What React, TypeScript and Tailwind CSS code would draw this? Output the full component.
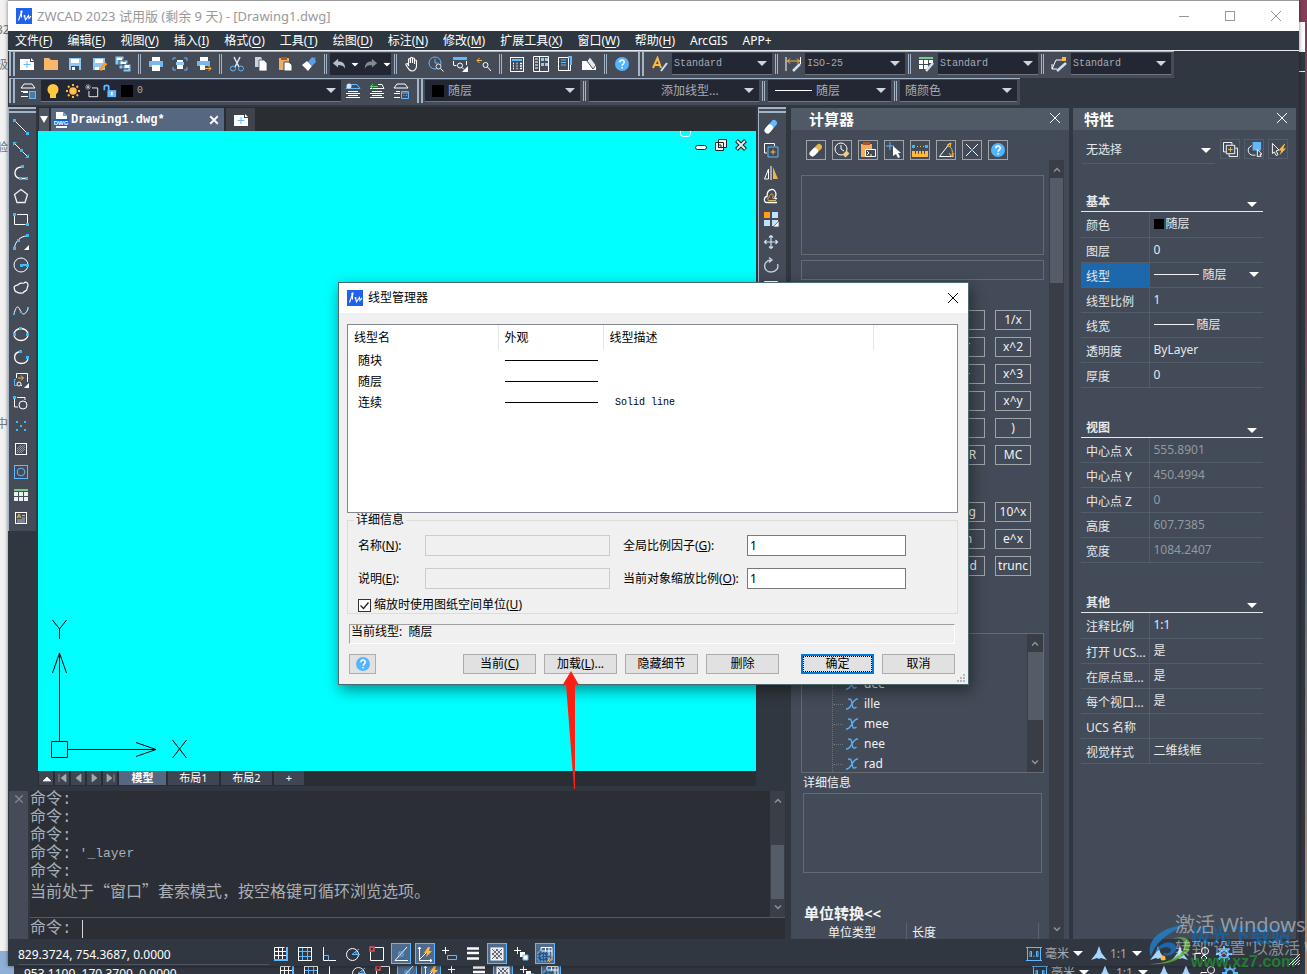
import type { ReactNode } from 'react'

const B = '#61b8ff'
const O = '#ffb93f'
const W = '#ffffff'

// アイコンはすべて 16x16 の viewBox で描く
const icons: Record<string, ReactNode> = {
  newDoc: <><path d="M1 3h10v3h4v8H1z" fill={W} stroke="none" /><path d="M12 2l3 3h-3z" fill={W} stroke="none" /><path d="M8 5v7M4.500 8.500h7" stroke={B} /></>,
  folder: <path d="M1 2h5l2 2h7v10H1z" fill="#f8b769" stroke="none" />,
  save: <><path d="M2 2h12v12H2z" fill="#8cc8f8" stroke="none" /><path d="M4 3h8v4H4z" fill={W} stroke="none" /><path d="M4 10h8v4H4z" fill="#3a4b66" stroke="none" /><path d="M5 11h3v3H5z" fill={W} stroke="none" /></>,
  saveAs: <><path d="M2 2h12v12H2z" fill="#8cc8f8" stroke="none" /><path d="M4 3h8v4H4zM4 11h4v3H4z" fill={W} stroke="none" /><path d="M9 14l6-7" stroke="#ff9b2b" strokeWidth="3" /></>,
  saveAll: <><path d="M0 0h9v9H0zM4 4h9v9H4zM8 8h8v8H8z" fill="#8cc8f8" stroke="#454b57" /><path d="M2 2h5v2H2zM6 6h5v2H6zM10 9h4v3h-4z" fill={W} stroke="none" /></>,
  print: <><path d="M4 1h8v4H4zM4 9h8v6H4z" fill={W} stroke="none" /><path d="M1 5h14v6H1z" fill="#74b8ef" stroke="none" /><path d="M4 9h8v5H4z" fill={W} stroke="none" /></>,
  preview: <><path d="M1 4V2h3M12 2h3v3M15 11v3h-3M4 14H1v-3" stroke={B} /><path d="M5 4h6v2H5zM5 9h6v4H5z" fill={W} stroke="none" /><path d="M4 6h8v3H4z" fill="#8cc8f8" stroke="none" /></>,
  plot: <><path d="M4 1h8v4H4z" fill={W} stroke="none" /><path d="M1 5h13v5H1z" fill="#74b8ef" stroke="none" /><path d="M4 9h5v5H4z" fill={W} stroke="none" /><path d="M9 12.500h6M12.500 10l2.500 2.500-2.500 2.500" stroke={O} /></>,
  cut: <><path d="M5 1l5 10M11 1L6 11" stroke="#dfe9f5" strokeWidth="1.500" /><circle cx="4" cy="12.500" r="2.500" stroke={B} /><circle cx="12" cy="12.500" r="2.500" stroke={B} /></>,
  copy: <><path d="M2 1h6l1 2v8H2z" fill="#c9d3e0" stroke="none" /><path d="M6 4h5l3 3v8H6z" fill={W} stroke="#454b57" strokeWidth=".8" /></>,
  paste: <><path d="M2 2h10v12H2z" fill="#f1ad63" stroke="none" /><path d="M4 1h6v3H4z" fill="#a8572a" stroke="none" /><path d="M7 6h5l3 3v6H7z" fill={W} stroke="#454b57" /></>,
  brush: <><path d="M1 9l5-4 5 5-4 5z" fill={W} stroke="none" /><path d="M7 6l4 4 4-4-1-3 1-2-2 1-2-1z" fill="#5b9de6" stroke="none" /></>,
  undo: <path d="M1 7l6-5v3c5 0 8 2 8 8-2-3-4-4-8-4v3z" fill="#b8bcc4" stroke="none" />,
  redo: <path d="M15 7L9 2v3c-5 0-8 2-8 8 2-3 4-4 8-4v3z" fill="#84888f" stroke="none" />,
  pan: <path d="M4.500 10V4M4.500 8V3.500c0-1.300 1.800-1.300 1.800 0V7M6.500 7V2.300c0-1.300 2-1.300 2 0V7M8.500 7V3c0-1.300 2-1.300 2 0v5M10.500 7V5c0-1.300 2-1.300 2 0v5c0 3-2 5-4.500 5S5 13.500 4 12L2 9c-.5-1.500 1.200-1.800 2-.5L5 10" stroke={W} strokeWidth="1.100" />,
  zoomRt: <><circle cx="7" cy="7" r="6" stroke={B} /><path d="M7 3v4h3" stroke={B} /><circle cx="10.500" cy="10.500" r="2.500" stroke="#dde3ea" fill="#454b57" /><path d="M12.500 12.500l3 3" /></>,
  zoomWin: <><path d="M1.500 9V5M14.500 5v4" /><path d="M1 1h14v3H1z" fill={B} stroke="none" /><path d="M1.500 9.500h3" /><circle cx="8" cy="9.500" r="2.500" /><path d="M10 11.500l2 2" /><path d="M16 10v6h-6z" fill={W} stroke="none" /></>,
  zoomPrev: <><path d="M6 4.500H1M3.500 2L1 4.500 3.500 7" stroke={O} /><circle cx="9.500" cy="9" r="2.500" /><path d="M11.500 11l3.500 4" /></>,
  calc: <><rect x="1.500" y="1.500" width="13" height="14" /><path d="M3 4h10" stroke={B} strokeWidth="2" /><path d="M4 7.500h1M7.500 7.500h1M11 7.500h2M4 10h1M7.500 10h1M11 10h2M4 12.500h1M7.500 12.500h1M11 12.500h2" strokeWidth="1.500" /></>,
  palette: <><path d="M.5.500h15v15H.5zM6.500.5v15M2 3h3M2 6h3M2 9h3M2 12h3" /><path d="M8 2h3v3H8zM12 2h3v3h-3zM8 7h3v3H8zM12 7h3v3h-3z" fill="#9fc9ef" stroke="none" /></>,
  sheet: <><path d="M1.500 1.500h10v13h-10z" /><path d="M4 4h5M4 6.500h5M4 9h5" stroke={B} /><path d="M11 1h3v8" stroke={B} strokeWidth="2" /><path d="M13.500 9v5.500h-2" /></>,
  roll: <><path d="M1 5h7l7 5v4H1z" fill={W} stroke="none" /><path d="M6 5l3-4 6 8-3 4z" fill="#e4e8ee" stroke="#454b57" /></>,
  help: <><circle cx="8" cy="8" r="7" fill="#54b4ff" stroke="none" /><path d="M5.800 6.300c0-3 4.500-3 4.500-.2 0 1.800-2.200 1.700-2.200 3.700M8.100 11v1.500" stroke={W} strokeWidth="1.500" /></>,
  textStyle: <><path d="M1 12L5.500 2 9 12M3 9h5" stroke={O} strokeWidth="2" /><path d="M9 15l6-8" stroke="#cfdff0" strokeWidth="2" /></>,
  dimStyle: <><path d="M1 1v14M15.500 1v7" /><path d="M2 5h13M5 2.500L2.500 5 5 7.500M12 2.500L14.500 5 12 7.500" stroke={O} /><path d="M8 15l7-7" stroke="#cfdff0" strokeWidth="2.500" /></>,
  tableStyle: <><path d="M1 1h14v2H1z" fill="#79c98a" stroke="none" /><path d="M1 4h4v4H1zM6 4h4v4H6zM11 4h4v3h-4zM1 9h4v4H1zM6 9h4v4H6z" fill={W} stroke="none" /><path d="M8 15l7-8" stroke="#cfdff0" strokeWidth="2.500" /></>,
  leaderStyle: <><path d="M1 13l4-9h6M1 8v5h5" /><path d="M11 1h4v4h-4z" fill={O} stroke="none" /><path d="M6 15l9-8" stroke="#cfdff0" strokeWidth="2.500" /></>,
  layers: <><path d="M4 1h8l3 4H1zM1 8.500h7M3 9.500h5M1 13.500h7" /><path d="M9 8h7v8H9z" fill={B} stroke="none" /><path d="M10 10h5M10 12h5M10 14h5" stroke="#2f3d52" /></>,
  layerCur: <><path d="M4 1.500h8l3 4H1z" stroke={B} /><circle cx="4" cy="3" r="2.500" fill="#dbe6f2" stroke="none" /><path d="M3 8.500h10M1 10.500h14M3 12.500h10M1 14.500h14" /></>,
  layerPrev: <><path d="M9 1.500h4l2 4H1" /><path d="M9 3.500H2M4 1L1.500 3.500 4 6" stroke="#5bd06b" /><path d="M3 8.500h10M1 10.500h14M3 12.500h10M1 14.500h14" /></>,
  layerState: <><path d="M4 1h8l3 4H1zM3 8.500h4M1 10.500h6M1 14.500h6" /><path d="M8.500 8.500h7v7h-7zM9 10h6M10.500 12.500h1M13 12.500h1" stroke={B} /></>,
  bulb: <><circle cx="8" cy="6.500" r="5.500" fill="#ffc83d" stroke="none" /><path d="M5 11h6v4H5z" fill="#ffc83d" stroke="none" /></>,
  sun: <><circle cx="8" cy="8" r="3" stroke={O} strokeWidth="1.500" fill="#ffc83d" /><path d="M8 1v2M8 13v2M1 8h2M13 8h2M3 3l1.500 1.500M11.500 11.500L13 13M13 3l-1.500 1.500M3 13l1.500-1.500" stroke={O} strokeWidth="2" /></>,
  viewport: <><path d="M8 4.500h6.500v10h-10V8" /><path d="M3.500 0v7M0 3.500h7M1 1l5 5M6 1L1 6" stroke="#c8ccd2" strokeWidth=".8" /></>,
  lock: <><path d="M1.500 7V3c0-2 5-2 5 0v4" stroke={B} strokeWidth="2" /><path d="M5 7h10v8H5z" fill={B} stroke="none" /><path d="M9 9h2v4H9z" fill={W} stroke="none" /></>,
  line: <><path d="M1.500 1.500l13 13" /><path d="M0 0h3v3H0zM13 13h3v3h-3z" fill="#36bdf8" stroke="none" /></>,
  xline: <><path d="M1 1l14 14" /><path d="M0 0h4L0 4zM16 16v-4l-4 4zM7 7h3v3H7z" fill="#36bdf8" stroke="none" /></>,
  pline: <><path d="M9 2C0 2 0 13 7 13.500h7" strokeWidth="1.300" /><path d="M8 0h3v3H8zM6 12h3v3H6zM12 12h3v3h-3z" fill="#36bdf8" stroke="none" /></>,
  polygon: <path d="M8 1.500l6.500 5-2.500 8H4l-2.500-8z" stroke="#f0f2f4" strokeWidth="1.300" />,
  rect: <><path d="M1.500 4v9.500h11M4 3.500h10.500V12" /><path d="M0 2h3v3H0zM13 12h3v3h-3z" fill="#36bdf8" stroke="none" /></>,
  arc: <><path d="M1.500 14C2 8 7 2 14 2" /><path d="M0 13h3v3H0zM4 5h3v3H4zM13 0h3v3h-3z" fill="#36bdf8" stroke="none" /><path d="M16 11v5h-5z" fill={W} stroke="none" /></>,
  circle: <><circle cx="8" cy="8" r="7" /><path d="M9 8h5" /><path d="M7 7h3v3H7zM13 7h3v3h-3z" fill="#36bdf8" stroke="none" /></>,
  cloud: <path d="M1 7c2-3 4-1 5-3 2-2 3 0 5-1 2-2 4 0 4 2s-1 2-1 4-3 2-4 4c-2 0-4 1-6-1-3 0-2-2-3-5z" strokeWidth="1.200" />,
  spline: <><path d="M1 11C3 3 5 2 7 7s5 6 8-1" /><path d="M0 10h2v2H0zM7 8h2v2H7zM14 4h2v2h-2z" fill="#36bdf8" stroke="none" /></>,
  ellipse: <><ellipse cx="8" cy="8.500" rx="7" ry="6" strokeWidth="1.300" /><path d="M6 1h3v3H6zM0 7h3v3H0zM13 7h3v3h-3z" fill="#36bdf8" stroke="none" /></>,
  ellArc: <><path d="M8 2.500c-9 1-8 11 0 12 4 0 7-2 7-6" strokeWidth="1.300" /><path d="M6 1h3v3H6zM13 7h3v3h-3z" fill="#36bdf8" stroke="none" /></>,
  insert: <><path d="M3.500 6V1.500h11V10M8 13.500H9" /><path d="M3 7.500H1.500v6H4" stroke={B} /><circle cx="6" cy="12" r="2" /><path d="M5 6h5M8 3.500L10.500 6 8 8.500" stroke={O} /><path d="M16 11v5h-5z" fill={W} stroke="none" /></>,
  block: <><path d="M1.500 4v8H5M4 2.500h8V5" /><circle cx="10" cy="10" r="4" /><path d="M0 1h3v3H0z" fill="#36bdf8" stroke="none" /></>,
  points: <path d="M3 3h2v2H3zM11 3h2v2h-2zM7 7h2v2H7zM3 11h2v2H3zM11 11h2v2h-2z" fill="#36bdf8" stroke="none" />,
  hatch: <><rect x="2.500" y="2.500" width="11" height="11" /><path d="M4 8l4-4M4 12l8-8M8 12l4-4M6 12l6-6M4 10l6-6" stroke={B} strokeWidth=".8" /></>,
  region: <><rect x="1.500" y="1.500" width="13" height="13" stroke={B} /><circle cx="8" cy="8" r="3.800" stroke={B} /></>,
  table: <><path d="M1 2h14v2H1z" fill="#79c98a" stroke="none" /><path d="M1 5h4v4H1zM6 5h4v4H6zM11 5h4v4h-4zM1 10h4v4H1zM6 10h4v4H6zM11 10h4v4h-4z" fill="#eceff2" stroke="none" /></>,
  mtext: <><rect x="2.500" y="2.500" width="11" height="11" /><path d="M4 8l2-4 2 4M5 7h2" stroke={O} /><path d="M9 5.500h3M9 8h3M4 10h8M4 12h8" stroke="#cfdff0" strokeWidth=".8" /></>,
  erase: <><path d="M6 10l5-6" stroke={B} strokeWidth="6" strokeLinecap="round" /><path d="M4.500 11.500l2.500-3" stroke={W} strokeWidth="6" strokeLinecap="round" /></>,
  copyObj: <><path d="M4 11H1.500V1.500h10V4" /><path d="M5 5h10v10H5z" stroke={B} /><path d="M10 7.500v5M7.500 10h5" stroke={O} /></>,
  mirror: <><path d="M5.500 4v10H1.500zM8 1v14" /><path d="M10 2l5 12h-5z" fill="#e8b54d" stroke="none" /></>,
  offset: <><path d="M14 14.500H4c-4 0-3-6 0-6 0-9 9-9 9-2 0 2-2 3-1 4h2" strokeWidth="1.300" /><path d="M13 12.500H6c-2 0-1-3 0-3 1-5 5-4 4-1-.5 1.500-1 2 1 2" stroke="#e8b54d" /></>,
  array: <><path d="M1 1h6v6H1z" fill="#ff9f12" stroke="none" /><path d="M9 1h6v6H9zM1 9h6v6H1zM9 9h6v6H9z" fill="#bfe0ff" stroke="none" /><path d="M16 10v6h-6z" fill={W} stroke="#454b57" strokeWidth=".7" /></>,
  move: <path d="M8 1.500v13M1.500 8h13M6 3.500L8 1.500l2 2M6 12.500l2 2 2-2M3.500 6l-2 2 2 2M12.500 6l2 2-2 2" stroke="#cfe2f5" strokeWidth="1.200" />,
  rotate: <path d="M8 3C-1 4 0 15 8 15c5 0 8-4 6.500-8M6 .5L9 3 6 5.500" stroke="#b9cfe6" strokeWidth="1.400" />,
  scale: <path d="M1.500 1.500h13v13h-13z" />,
  eraseGold: <><path d="M6 10l5-5" stroke="#e8b54d" strokeWidth="6" strokeLinecap="round" /><path d="M4.500 11.500l2.500-2.500" stroke={W} strokeWidth="6" strokeLinecap="round" /></>,
  history: <><circle cx="7" cy="7" r="6" /><path d="M7 3v4l3 2" /><path d="M10 14l4-4" stroke="#f3cc83" strokeWidth="4" /></>,
  pasteCmd: <><path d="M1 2h11v13H1z" fill="#f1ad63" stroke="none" /><path d="M3 0h7v3H3z" fill="#a8572a" stroke="none" /><path d="M5.500 7.500h10v7h-10z" fill="#424b57" /><path d="M7 9l2 2-2 2M10 13h2" /></>,
  pick: <><path d="M4 0v8M0 4h8" stroke={B} /><path d="M7 4l8 7h-3l2 4-2 1-2-4-3 2z" fill={W} stroke="none" /></>,
  ruler: <><path d="M0 9h16v6H0z" fill={O} stroke="none" /><path d="M3.500 9v3M6.500 9v3M9.500 9v3M12.500 9v3" stroke="#424b57" /><path d="M0 3h3v3H0zM13 3h3v3h-3z" fill="#36bdf8" stroke="none" /><path d="M5 4.500h1M8 4.500h1M11 4.500h1" stroke={O} /></>,
  angle: <><path d="M12 1L1.500 14.500h14" /><path d="M10 4c4 1 5 5 4 10M9 3l4-2-1 4M11 11l3 4 2-4" stroke={O} /></>,
  cross: <><path d="M2 2l12 12M14 2L2 14" /><path d="M7 7h2v2H7z" fill={B} stroke="none" /></>,
  quickSel: <><path d="M3 10.500H.5V.500h9V3M13 6.500h2.500v9h-9V13" /><path d="M3.500 3.500h9v9h-9z" /><path d="M8 5.500v5M5.500 8h5" stroke={O} /></>,
  selBox: <><path d="M5 4c-6 2-4 10 1 10h3" /><path d="M6 0h9v9H6z" fill={B} stroke="none" /><path d="M11 8l5 5h-2l1 3-2-1-2 1z" fill="#424b57" /></>,
  flashSel: <><path d="M1.500 1.500l7 7-3 1 2 4-2 1-2-4-2 2z" /><path d="M14 2l-6 7h3l-2 5 7-7h-3l2-5z" fill={O} stroke="none" /></>,
  snap: <><path d="M1.500 1.500h10M1.500 5.500h12M1.500 9.500h12M1.500 1.500v12M5.500 1.500v12M9.500 1.500v12" /><path d="M14 1v13H1" stroke={B} strokeWidth="2" /></>,
  grid: <><path d="M5.500 1.500v13M10.500 1.500v13M1.500 5.500h13M1.500 10.500h13" stroke={B} /><rect x="1.500" y="1.500" width="13" height="13" /></>,
  ortho: <><path d="M2.500 1v13.500H15" /><path d="M2.500 9.500h5v5" stroke={B} /></>,
  polar: <><circle cx="7.500" cy="8.500" r="6" /><path d="M14 3L7 8.500h8M11 5v4" stroke={B} /></>,
  osnap: <><path d="M6 1.500h8.500v13H1.500V6" /><path d="M1 1h4v4H1z" stroke="#e0545c" strokeWidth="1.500" /></>,
  otrack: <><path d="M14 1L2 14.500h13" stroke={W} /><path d="M6 6h4v4H6z" stroke={B} /></>,
  ucs: <><path d="M2.500 1v13.500H15M1 3l1.500-2L4 3M13 13l2 1.500-2 1.500M2 14L10 6" /><path d="M11 1L7 7h3l-1 4 6-6h-3l1-4z" fill={O} stroke="none" /></>,
  dyn: <><path d="M4.500 1v7M1 4.500h7" /><path d="M6.500 9.500h9v4h-9z" stroke={B} /></>,
  lwt: <path d="M2 2.500h12M2 7h12M2 12.500h12" strokeWidth="2.500" />,
  trans: <><rect x="2" y="2" width="12" height="12" fill="#e0e3e7" /><path d="M3 3l10 10M3 7l6 6M7 3l6 6M13 3L3 13M9 3L3 9M13 7l-6 6" stroke="#454b57" strokeWidth=".8" /></>,
  cycle: <><path d="M4.500 1v7M1 4.500h7" /><path d="M7 6h5v5H7z" fill={W} stroke="none" /><path d="M10 9h5v5h-5z" fill={W} stroke={B} /></>,
  model: <><path d="M4 5V1.500h11V10M8.500 1.500v8M12 1.500v8M5 5h10" /><path d="M1 6h10v9H1zM4 9h4v3H4z" stroke={B} fill="#33527a" strokeDasharray="2 1" /><path d="M15 10v4h-4M13 12l-2 2 2 2" stroke={O} /></>,
  units: <><path d="M0 1.500h16M0 14.500h16M1.500 1v14M14.500 1v14" stroke={B} /><path d="M4 5.500h1.500v5H4zM10.500 5.500H12v5h-1.500zM8 9.500v1.500" stroke={B} /></>,
  anno: <path d="M8 0l2.500 7L16 14l-6-2-2 1-2-1-6 2 5.500-7z" fill="#a9d6ff" stroke="none" />,
  annoDot: <><path d="M8 0l2.500 7L16 14l-6-2-2 1-2-1-6 2 5.500-7z" fill="#a9d6ff" stroke="none" /><circle cx="13" cy="12" r="2.500" fill={O} stroke="none" /></>,
  iso: <><path d="M1 14V7.500h6" /><circle cx="11" cy="5" r="3.500" /><path d="M10 9l3 3-3 3-3-3z" /></>,
  gear: <><circle cx="8" cy="8" r="4" stroke={B} strokeWidth="2.200" /><path d="M8 0v3M8 13v3M0 8h3M13 8h3M2.500 2.500l2 2M11.500 11.500l2 2M13.500 2.500l-2 2M2.500 13.500l2-2" stroke={B} strokeWidth="2" /></>,
  close: <path d="M3 3l10 10M13 3L3 13" stroke="currentColor" />,
  x: <path d="M4 3.500c2.500-1.500 3.500 0 4 4s1.500 6 4.500 3.500M14 3c-3-.5-4.500 2.500-6 5s-3 5.500-6 5" stroke="#5aaef2" strokeWidth="1.500" />,
}

function Icon({ name, className = 'size-4' }: { name: string; className?: string }) {
  return (
    <svg viewBox="0 0 16 16" className={className + ' shrink-0'} fill="none" stroke="#ffffff" strokeWidth="1" aria-hidden="true">
      {icons[name]}
    </svg>
  )
}

function Tri({ className = 'text-[#d0d3d7]' }: { className?: string }) {
  return (
    <svg viewBox="0 0 10 5" className={'h-[5px] w-[10px] shrink-0 pointer-events-none ' + className} aria-hidden="true">
      <path d="M0 0h10L5 5z" fill="currentColor" />
    </svg>
  )
}

function Chevron({ down = false }: { down?: boolean }) {
  return (
    <svg viewBox="0 0 8 5" className="h-[5px] w-2 shrink-0" fill="none" stroke="#8b929b" strokeWidth="1.5" aria-hidden="true">
      <path d={down ? 'M1 0.500l3 3 3-3' : 'M1 4.500l3-3 3 3'} />
    </svg>
  )
}

function Logo() {
  return (
    <svg viewBox="0 0 16 16" className="size-4 shrink-0" aria-hidden="true">
      <rect width="16" height="16" fill="#1f62f0" />
      <path d="M2.500 12.500L5.500 4v5.500M8.500 8l1 4 3-4.500.5 3 2-2.500" fill="none" stroke="#fff" strokeWidth="1.100" />
      <circle cx="5.500" cy="3.800" r="1.200" fill="#fff" />
      <circle cx="8.500" cy="8" r="1" fill="#fff" />
    </svg>
  )
}

function DwgIcon() {
  return (
    <svg viewBox="0 0 16 16" className="size-4 shrink-0" aria-hidden="true">
      <path d="M3 0h7l4 4v12H3z" fill="#fff" />
      <path d="M10 0l4 4h-4z" fill="#5aa0e8" />
      <path d="M0 7h16v7H0z" fill="#1260d6" />
      <text x="8" y="13" textAnchor="middle" className='fill-white font-["Liberation_Sans",sans-serif] text-[6px] font-bold'>DWG</text>
    </svg>
  )
}

function ToolButton({ name }: { name: string }) {
  return (
    <button className="flex w-6 shrink-0 items-center justify-center" aria-label={name}>
      <Icon name={name} />
    </button>
  )
}

const Sep = () => <div className="mx-[3px] w-[3px] shrink-0 self-stretch my-0.5 border-x border-[#a3b3c8]" />
const Grip = () => <div className="w-1.5 shrink-0 self-stretch border-x-2 border-[#a3b3c8]" />

function Combo({ value, label, className, before, latin = false, right = false }: {
  value: string
  label: string
  className: string
  before?: ReactNode
  latin?: boolean
  right?: boolean
}) {
  return (
    <div className={'flex h-[22px] shrink-0 items-center gap-1 border-b border-[#70757e] bg-[#222733] pr-[5px] ' + className}>
      {before}
      <select
        aria-label={label}
        className={
          'min-w-0 flex-1 appearance-none bg-transparent text-[#a6abb3] outline-none ' +
          (latin ? 'font-["Liberation_Mono","Noto_Sans_CJK_SC",monospace] text-[10px] ' : 'text-xs ') +
          (right ? 'pl-[68px]' : '')
        }
      >
        <option>{value}</option>
      </select>
      <Tri />
    </div>
  )
}

const menus = [
  ['文件', 'F'], ['编辑', 'E'], ['视图', 'V'], ['插入', 'I'], ['格式', 'O'], ['工具', 'T'], ['绘图', 'D'],
  ['标注', 'N'], ['修改', 'M'], ['扩展工具', 'X'], ['窗口', 'W'], ['帮助', 'H'], ['ArcGIS', ''], ['APP+', ''],
]

const toolGroups = [
  ['newDoc', 'folder', 'save', 'saveAs', 'saveAll'],
  ['print', 'preview', 'plot'],
  ['cut', 'copy', 'paste', 'brush'],
]

const toolGroups2 = [
  ['pan', 'zoomRt', 'zoomWin', 'zoomPrev'],
  ['calc', 'palette', 'sheet', 'roll'],
]

const styleCombos = [
  { icon: 'textStyle', value: 'Standard', label: '文字样式' },
  { icon: 'dimStyle', value: 'ISO-25', label: '标注样式' },
  { icon: 'tableStyle', value: 'Standard', label: '表格样式' },
  { icon: 'leaderStyle', value: 'Standard', label: '引线样式' },
]

const drawTools = ['line', 'xline', 'pline', 'polygon', 'rect', 'arc', 'circle', 'cloud', 'spline', 'ellipse', 'ellArc', 'insert', 'block', 'points', 'hatch', 'region', 'table', 'mtext']
const modifyTools = ['erase', 'copyObj', 'mirror', 'offset', 'array', 'move', 'rotate', 'scale', 'rect', 'line', 'arc', 'block', 'points']
const calcTools = ['eraseGold', 'history', 'pasteCmd', 'pick', 'ruler', 'angle', 'cross', 'help']

const numberPad = ['C', '<--', 'sqrt', '/', '1/x', '7', '8', '9', '*', 'x^2', '4', '5', '6', '+', 'x^3', '1', '2', '3', '-', 'x^y', '0', '.', 'pi', '(', ')', '=', 'MS', 'M+', 'MR', 'MC']
const sciencePad = ['sin', 'cos', 'tan', 'log', '10^x', 'asin', 'acos', 'atan', 'ln', 'e^x', 'r2d', 'd2r', 'abs', 'rnd', 'trunc']

const statusTools = ['snap', 'grid', 'ortho', 'polar', 'osnap', 'otrack', 'ucs', 'dyn', 'lwt', 'trans', 'cycle', 'model']
const activeStatus = ['otrack', 'ucs', 'trans', 'model']

const Rule = ({ className }: { className: string }) => <span className={'h-px shrink-0 bg-[#f0f2f4] ' + className} />

type Row = { name: string; value?: ReactNode; selected?: boolean }
const sections: { title: string; rows: Row[]; dim?: boolean }[] = [
  {
    title: '基本',
    rows: [
      { name: '颜色', value: <><span className="mr-0.5 size-[10px] bg-black" />随层</> },
      { name: '图层', value: '0' },
      { name: '线型', value: <><Rule className="w-[45px]" /><span className="ml-1 flex-1">随层</span><Tri className="text-white mr-1" /></>, selected: true },
      { name: '线型比例', value: '1' },
      { name: '线宽', value: <><Rule className="w-10" /><span className="ml-[3px]">随层</span></> },
      { name: '透明度', value: 'ByLayer' },
      { name: '厚度', value: '0' },
    ],
  },
  {
    title: '视图',
    dim: true,
    rows: [
      { name: '中心点 X', value: '555.8901' },
      { name: '中心点 Y', value: '450.4994' },
      { name: '中心点 Z', value: '0' },
      { name: '高度', value: '607.7385' },
      { name: '宽度', value: '1084.2407' },
    ],
  },
  {
    title: '其他',
    rows: [
      { name: '注释比例', value: '1:1' },
      { name: '打开 UCS...', value: '是' },
      { name: '在原点显...', value: '是' },
      { name: '每个视口...', value: '是' },
      { name: 'UCS 名称' },
      { name: '视觉样式', value: '二维线框' },
    ],
  },
]

function TitleBar() {
  return (
    <header className="flex h-[30px] shrink-0 items-stretch bg-white text-[#999]">
      <div className="flex flex-1 items-center gap-[5px] pl-2">
        <Logo />
        <h1 className="text-[13px]">ZWCAD 2023 试用版 (剩余 9 天) - [Drawing1.dwg]</h1>
      </div>
      <button className="flex w-[46px] items-center justify-center" aria-label="最小化"><span className="h-px w-[10px] bg-[#999]" /></button>
      <button className="flex w-[46px] items-center justify-center" aria-label="最大化"><span className="size-[10px] border border-[#999]" /></button>
      <button className="flex w-[46px] items-center justify-center" aria-label="关闭"><Icon name="close" className="size-4" /></button>
    </header>
  )
}

function MenuBar() {
  return (
    <nav className="flex h-5 shrink-0 items-center gap-[15px] border-b border-[#e6eaee] bg-[#2e3740] pl-[7px] text-white">
      {menus.map(([text, key]) => (
        <button key={text} className="whitespace-nowrap">
          {text}{key && <>(<u className="underline-offset-2">{key}</u>)</>}
        </button>
      ))}
    </nav>
  )
}

function Toolbars() {
  return (
    <div className="flex shrink-0 flex-col items-start">
      <div className="flex h-[27px] items-center border-t border-[#a3b3c8] bg-[#454b57] pb-0.5 pr-[3px]">
        <Grip />
        {toolGroups.map((group, i) => (
          <div key={i} className="flex h-full items-center">
            {group.map(n => <ToolButton key={n} name={n} />)}
            <Sep />
          </div>
        ))}
        <div className="flex h-[22px] w-[61px] items-center gap-1 bg-[#222733] pl-0.5">
          <button aria-label="放弃"><Icon name="undo" className="size-[14px]" /></button>
          <Tri className="text-white scale-75" />
          <button aria-label="重做"><Icon name="redo" className="size-[14px]" /></button>
          <Tri className="text-white scale-75" />
        </div>
        <Sep />
        {toolGroups2.map((group, i) => (
          <div key={i} className="flex h-full items-center">
            {group.map(n => <ToolButton key={n} name={n} />)}
            <Sep />
          </div>
        ))}
        <ToolButton name="help" />
        <div className="mx-1 flex self-stretch"><Grip /></div>
        {styleCombos.map((c, i) => (
          <div key={c.icon} className="flex h-full items-center">
            {i > 0 && <Sep />}
            <ToolButton name={c.icon} />
            <Combo value={c.value} label={c.label} className="w-[100px] pl-0.5" latin />
          </div>
        ))}
      </div>

      <div className="flex h-[27px] items-center border-t border-[#a3b3c8] bg-[#454b57] pb-0.5 pr-[3px]">
        <Grip />
        <div className="flex w-[26px] justify-center"><ToolButton name="layers" /></div>
        <Combo
          value="0"
          label="图层"
          className="w-[300px] pl-1"
          latin
          before={<>
            <Icon name="bulb" /><Icon name="sun" /><Icon name="viewport" className="size-[14px]" /><Icon name="lock" className="size-[14px]" />
            <span className="size-3 bg-black" />
          </>}
        />
        <ToolButton name="layerCur" />
        <ToolButton name="layerPrev" />
        <ToolButton name="layerState" />
        <div className="ml-1 mr-0.5 flex self-stretch"><Grip /></div>
        <Combo value="随层" label="颜色" className="w-[155px] pl-[7px]" before={<span className="size-3 bg-black" />} />
        <Sep />
        <Combo value="添加线型..." label="线型" className="w-[170px] pl-1" right />
        <Sep />
        <Combo value="随层" label="线宽" className="w-[123px] pl-[7px]" before={<span className="h-px w-[37px] bg-white" />} />
        <Sep />
        <Combo value="随颜色" label="打印样式" className="w-[117px] pl-[5px]" />
      </div>
    </div>
  )
}

function ToolColumn({ names }: { names: string[] }) {
  return (
    <div className="flex w-7 shrink-0 flex-col self-start border-l border-[#a3b3c8] bg-[#454b57] pb-0.5">
      <div className="mb-0.5 h-1.5 border-y-2 border-[#a3b3c8]" />
      {names.map(n => (
        <button key={n} className="flex h-[23px] items-center justify-center pr-1" aria-label={n}>
          <Icon name={n} />
        </button>
      ))}
    </div>
  )
}

function DrawingArea() {
  return (
    <main className="flex min-w-0 flex-1 flex-col">
      <div className="flex h-6 shrink-0 gap-0.5 bg-[#2a2d31] pl-px pt-px">
        <button className="flex w-[10px] items-center justify-center bg-[#4d5661]" aria-label="图形列表">
          <svg viewBox="0 0 8 7" className="h-[7px] w-2"><path d="M0 0h8L4 7z" fill="#fff" /></svg>
        </button>
        <div className="flex w-[173px] items-center bg-[#566782] pl-0.5 pr-1 text-white">
          <DwgIcon />
          <span className='ml-0.5 flex-1 font-["Liberation_Mono",monospace] text-xs font-bold'>Drawing1.dwg*</span>
          <button aria-label="关闭图形" className="flex"><Icon name="close" className="size-3 [&>path]:stroke-[2.5]" /></button>
        </div>
        <button className="flex w-[29px] items-center justify-center bg-[#3f444c]" aria-label="新建图形"><Icon name="newDoc" /></button>
      </div>

      <div className="relative flex min-h-0 flex-1 flex-col justify-between bg-[#00ffff]">
        <div className="absolute right-[65px] top-0 h-1.5 w-[11px] rounded-b-sm border border-t-0 border-white" />
        <div className="flex items-center justify-end gap-2 pr-[9px] pt-2">
          <button aria-label="最小化图形" className="mt-1 h-[5px] w-3 rounded-sm border border-[#222] bg-white" />
          <button aria-label="还原图形">
            <svg viewBox="0 0 12 12" className="size-3" fill="#eee" stroke="#222"><path d="M3.500.5h8v8h-8zM.5 3.500h8v8h-8zM3.500 6h2.500v2.500H3.500z" /></svg>
          </button>
          <button aria-label="关闭图形窗口">
            <svg viewBox="0 0 12 12" className="size-3"><path d="M1.500 1.500l9 9M10.500 1.500l-9 9" stroke="#222" strokeWidth="4" /><path d="M2 2l8 8M10 2l-8 8" stroke="#eee" strokeWidth="1.800" /></svg>
          </button>
        </div>
        {/* UCS 坐标图标 */}
        <svg viewBox="0 0 140 144" className="mb-[10px] ml-3 h-36 w-[140px]" fill="none" stroke="#000">
          <path d="M2.500 3l7 9 7-9M9.500 12v10M9.500 36v88M2.500 56l7-20 7 20M1.500 124.500h16v16h-16zM18 132.500h87M86 125.500l20 7-20 7M122.500 123l14 18M136.500 123l-14 18" />
        </svg>
      </div>

      <div className="flex h-[15px] shrink-0 gap-0.5 bg-[#2a2d31] pb-px pl-px text-[11px] leading-3 text-white">
        {['M2 8l4-4 4 4z', 'M2 1v8M9 1L4 5l5 4z', 'M8 1L3 5l5 4z', 'M3 1l5 4-5 4z', 'M9 1v8M2 1l5 4-5 4z'].map((d, i) => (
          <button key={d} className="flex w-[14px] items-center justify-center bg-[#3f4551]" aria-label={`布局导航${i + 1}`}>
            <svg viewBox="0 0 11 10" className="h-[10px] w-[11px]"><path d={d} fill={i ? '#a5aab3' : '#fff'} stroke={i ? '#a5aab3' : '#fff'} strokeWidth=".7" /></svg>
          </button>
        ))}
        <button className="flex w-[47px] items-center justify-center bg-[#566782] font-bold">模型</button>
        <button className="flex w-[51px] items-center justify-center bg-[#3f4551]">布局1</button>
        <button className="flex w-[51px] items-center justify-center bg-[#3f4551]">布局2</button>
        <button className="flex w-[30px] items-center justify-center bg-[#3f4551]">+</button>
      </div>
    </main>
  )
}

function CommandLine() {
  return (
    <section className='flex h-[148px] shrink-0 bg-[#2b2e34] font-["Liberation_Mono","Noto_Sans_CJK_SC",monospace] text-base text-[#a9afb8]'>
      <div className="flex w-[21px] shrink-0 justify-center border-r-2 border-[#313740] bg-[#454b59] pt-0.5 text-[#7d838c]">
        <button className="h-3" aria-label="关闭命令行"><Icon name="close" className="size-3 [&>path]:stroke-2" /></button>
      </div>
      <div className="flex min-w-0 flex-1 flex-col">
        <div className="flex min-h-0 flex-1">
          <div className="grid flex-1 auto-rows-[18px] content-start items-center whitespace-pre leading-[18px]">
            <p>命令:</p>
            <p>命令:</p>
            <p>命令:</p>
            <p className="flex items-center">命令:<span className="ml-2 text-[13px]">'_layer</span></p>
            <p>命令:</p>
            <p className='font-["Noto_Sans_CJK_SC",sans-serif]'>当前处于“窗口”套索模式，按空格键可循环浏览选项。</p>
          </div>
          <div className="flex w-[15px] flex-col items-center bg-[#3a3e47] py-[7px]">
            <Chevron />
            <div className="mb-1.5 mt-auto h-[54px] w-[13px] bg-[#535c67]" />
            <Chevron down />
          </div>
        </div>
        <label className="flex h-[22px] items-center border-t border-[#525a66]">
          命令:
          <input className="ml-[10px] h-[18px] flex-1 border-l border-[#d5d8dc] bg-transparent pl-0.5 outline-none" />
        </label>
      </div>
    </section>
  )
}

function PanelTitle({ text }: { text: string }) {
  return (
    <div className="flex h-[22px] shrink-0 items-center justify-between bg-[#505a66] pr-[6px] text-white">
      <h2 className="text-[15px] font-bold leading-5">{text}</h2>
      <button aria-label={'关闭' + text} className="mb-0.5 flex"><Icon name="close" className="size-4" /></button>
    </div>
  )
}

function Pad({ keys }: { keys: string[] }) {
  return (
    <div className="ml-[10px] grid w-[220px] grid-cols-5 gap-x-[10px] gap-y-[7px]">
      {keys.map(k => (
        <button key={k} className="flex h-5 items-center justify-center border border-[#a0a3a7]">{k}</button>
      ))}
    </div>
  )
}

function CalculatorPanel() {
  return (
    <aside className="mt-px flex w-[278px] shrink-0 flex-col bg-[#424b57] text-[#f2f3f5]">
      <div className="bg-[#505a66] pl-[18px]"><PanelTitle text="计算器" /></div>
      <div className="flex min-h-0 flex-1 pr-[5px]">
        <div className="min-w-0 flex-1 overflow-hidden pl-[10px] pr-[5px]">
          <div className="ml-[5px] mt-[10px] flex gap-1.5">
            {calcTools.map(n => (
              <button key={n} className="flex size-5 items-center justify-center border border-[#a0a3a7]" aria-label={n}><Icon name={n} /></button>
            ))}
          </div>
          <div className="mt-[15px] h-20 border border-[#676a70]" />
          <input aria-label="表达式" className="mt-[5px] block h-5 w-full border border-[#676a70] bg-transparent px-1 outline-none" />
          <h3 className="mb-1.5 mt-1 text-[15px] font-bold leading-5">数字键区&lt;&lt;</h3>
          <Pad keys={numberPad} />
          <h3 className="mb-2 mt-2 text-[15px] font-bold leading-[21px]">科学&lt;&lt;</h3>
          <Pad keys={sciencePad} />
          <h3 className="mb-2 mt-5 text-[15px] font-bold leading-[29px]">变量&lt;&lt;</h3>
          <div className="flex h-[140px] overflow-hidden border border-[#676a70]">
            <ul className="ml-[30px] flex-1 border-l border-dotted border-[#6b737e]">
              {['cur', 'cee', 'dee', 'ille', 'mee', 'nee', 'rad'].map(v => (
                <li key={v} className="flex h-5 items-center">
                  <span className="w-[10px] border-t border-dotted border-[#6b737e]" />
                  <Icon name="x" className="mr-1 ml-px size-4" />
                  {v}
                </li>
              ))}
            </ul>
            <div className="flex w-4 flex-col items-center bg-[#383d46] py-[7px]">
              <Chevron />
              <div className="mb-auto mt-1.5 h-[68px] w-[15px] bg-[#535c67]" />
              <Chevron down />
            </div>
          </div>
          <p className="ml-0.5 leading-5">详细信息</p>
          <div className="mx-0.5 h-20 border border-[#676a70]" />
          <h3 className="ml-[3px] mt-[30px] text-[15px] font-bold leading-5">单位转换&lt;&lt;</h3>
          <div className="mr-[5px] flex h-5 border-r border-[#59626d]">
            <span className="w-[106px] border-r border-[#59626d] pl-[27px] leading-5">单位类型</span>
            <span className="pl-[5px] leading-5">长度</span>
          </div>
        </div>
        <div className="mt-[30px] flex w-[15px] flex-col items-center bg-[#383d46] py-[7px]">
          <Chevron />
          <div className="mb-auto mt-1.5 h-[105px] w-[13px] bg-[#535c67]" />
          <Chevron down />
        </div>
      </div>
    </aside>
  )
}

function PropertiesPanel() {
  return (
    <aside className="mt-px flex w-[223px] shrink-0 flex-col bg-[#424b57] text-[#e6e8eb]">
      <div className="bg-[#505a66] pl-[11px]"><PanelTitle text="特性" /></div>
      <div className="flex h-[34px] shrink-0 items-end gap-1 pl-[9px] pr-[8px]">
        <div className="mr-px flex h-[27px] w-[133px] items-center border-b border-[#535d69] pl-1 pr-1">
          <select aria-label="选择对象" className="flex-1 appearance-none bg-transparent outline-none"><option>无选择</option></select>
          <Tri className="text-white" />
        </div>
        {['quickSel', 'selBox', 'flashSel'].map(n => (
          <button key={n} className="mb-[5px] flex size-5 items-center justify-center border border-[#535d69]" aria-label={n}><Icon name={n} className="size-[15px]" /></button>
        ))}
      </div>
      {sections.map((s, i) => (
        <section key={s.title} className="pl-2 pr-[33px]">
          <div className={'flex items-end justify-between border-b border-[#e6e8eb] pl-[5px] pr-1.5 font-bold ' + (i ? 'h-[50px]' : 'h-12')}>
            <h3 className="leading-[18px]">{s.title}</h3>
            <button className="pb-1" aria-label={'折叠' + s.title}><Tri className="text-white" /></button>
          </div>
          <table className="w-full table-fixed border-collapse">
            <tbody>
              {s.rows.map(r => (
                <tr key={r.name} className="h-[25px] border-b border-[#535d69]">
                  <th scope="row" className={'w-[68px] whitespace-nowrap border-r border-[#535d69] p-0 pl-[5px] pt-1 text-left font-normal leading-5 ' + (r.selected ? 'bg-[#1c68aa]' : '')}>{r.name}</th>
                  <td className={'p-0 pl-1 leading-5 ' + (s.dim ? 'text-[#9299a2]' : '')}><div className="flex items-center">{r.value}</div></td>
                </tr>
              ))}
            </tbody>
          </table>
        </section>
      ))}
    </aside>
  )
}

function StatusBar({ coords }: { coords: string }) {
  return (
    <footer className="flex h-[27px] shrink-0 items-center pl-[10px] pt-0.5">
      <div className="flex h-[22px] w-[251px] items-center border-b border-[#4d545f] pt-1 text-white">{coords}</div>
      <div className="flex flex-1">
        {statusTools.map(n => (
          <button
            key={n}
            aria-label={n}
            className={'mx-0.5 flex h-[21px] w-5 items-center justify-center border ' + (activeStatus.includes(n) ? 'border-[#61b8ff] bg-[#4e6a8c]' : 'border-transparent')}
          >
            <Icon name={n} />
          </button>
        ))}
      </div>
      <div className="mr-[67px] flex items-center text-[#a6abb3]">
        <Icon name="units" />
        <span className="ml-[3px] mr-1">毫米</span>
        <Tri className="text-white" />
        <Icon name="anno" className="ml-2 size-4" />
        <span className="ml-[3px] mr-1 w-[18px]">1:1</span>
        <Tri className="text-white" />
        <div className="ml-2 flex gap-1.5">
          <Icon name="annoDot" /><Icon name="anno" /><Icon name="iso" /><Icon name="gear" />
        </div>
      </div>
    </footer>
  )
}

const dialogButton = 'flex h-5 w-[73px] items-center justify-center border border-[#adadad] bg-[#e1e1e1]'

function LinetypeDialog() {
  return (
    <div role="dialog" aria-labelledby="dlg-title" className="absolute left-[338px] top-[282px] flex w-[631px] flex-col border border-[#4a6a70] bg-[#f0f0f0] text-black shadow-[2px_5px_14px_rgba(0,0,0,0.45)]">
      <div className="flex h-[30px] items-center bg-white pl-2 pr-[7px]">
        <Logo />
        <h2 id="dlg-title" className="ml-[5px] flex-1">线型管理器</h2>
        <button aria-label="关闭" className="flex"><svg viewBox="0 0 16 16" className="size-4" stroke="#000"><path d="M3 3l10 10M13 3L3 13" /></svg></button>
      </div>

      <div className="ml-2 mr-[10px] mt-[11px] h-[189px] border border-[#828790] bg-white">
        <table className="w-full table-fixed border-collapse text-left">
          <thead>
            <tr className="h-[25px]">
              <th className="w-[150px] border-r border-[#e5e5e5] p-0 pl-1.5 font-normal">线型名</th>
              <th className="w-[105px] border-r border-[#e5e5e5] p-0 pl-1.5 font-normal">外观</th>
              <th className="w-[270px] border-r border-[#e5e5e5] p-0 pl-1.5 font-normal">线型描述</th>
              <th />
            </tr>
          </thead>
          <tbody>
            {[['随块', ''], ['随层', ''], ['连续', 'Solid line']].map(([name, desc]) => (
              <tr key={name} className="h-[21px]">
                <td className="p-0 pl-[10px]">{name}</td>
                <td className="p-0 pl-[7px] pr-[5px]"><div className="h-px bg-black" /></td>
                <td className='p-0 pl-3 font-["Liberation_Mono",monospace] text-[10px]'>{desc}</td>
                <td />
              </tr>
            ))}
          </tbody>
        </table>
      </div>

      <fieldset className="ml-2 mr-[10px] h-[101px] border border-[#dcdcdc] pl-[10px]">
        <legend className="-ml-1 px-0.5 leading-[14px]">详细信息</legend>
        <div className="grid grid-cols-[67px_185px_13px_124px_159px] items-center gap-y-3 pt-2 whitespace-nowrap">
          <label htmlFor="lt-name">名称(<u>N</u>):</label>
          <input id="lt-name" disabled className="h-[21px] border border-[#ccc] bg-[#f0f0f0]" />
          <span />
          <label htmlFor="lt-global">全局比例因子(<u>G</u>):</label>
          <input id="lt-global" defaultValue="1" className="h-[21px] border border-[#7a7a7a] bg-white px-0.5" />
          <label htmlFor="lt-desc">说明(<u>E</u>):</label>
          <input id="lt-desc" disabled className="h-[21px] border border-[#ccc] bg-[#f0f0f0]" />
          <span />
          <label htmlFor="lt-scale">当前对象缩放比例(<u>O</u>):</label>
          <input id="lt-scale" defaultValue="1" className="h-[21px] border border-[#7a7a7a] bg-white px-0.5" />
        </div>
        <label className="mt-2 flex items-center gap-[3px]">
          <span className="grid">
            <input type="checkbox" defaultChecked className="peer col-start-1 row-start-1 size-[13px] appearance-none border border-[#333] bg-white" />
            <svg viewBox="0 0 13 13" className="pointer-events-none invisible col-start-1 row-start-1 size-[13px] peer-checked:visible" fill="none" stroke="#222" strokeWidth="1.300"><path d="M2.500 6.500l3 3 5-6" /></svg>
          </span>
          <span>缩放时使用图纸空间单位(<u>U</u>)</span>
        </label>
      </fieldset>

      <p className="ml-[10px] mr-[13px] mt-[10px] h-5 border border-b-white border-l-[#a0a0a0] border-r-white border-t-[#a0a0a0] pl-px leading-[14px]">当前线型:&nbsp; 随层</p>

      <div className="mb-[10px] mt-[10px] flex gap-2 pl-[10px] pr-[13px]">
        <button aria-label="帮助" className="mr-auto flex h-5 w-[27px] items-center justify-center border border-[#adadad] bg-[#e1e1e1]"><Icon name="help" /></button>
        <button className={dialogButton}>当前(<u>C</u>)</button>
        <button className={dialogButton}>加载(<u>L</u>)...</button>
        <button className={dialogButton}>隐藏细节</button>
        <button className={dialogButton}>删除</button>
        <button className="ml-[14px] flex h-5 w-[73px] items-center justify-center border-2 border-[#0078d7] bg-[#e1e1e1] outline-1 -outline-offset-3 outline-dotted outline-black">确定</button>
        <button className={dialogButton}>取消</button>
      </div>
      <svg viewBox="0 0 9 9" className="absolute bottom-px right-0.5 size-[9px]" fill="#b8b8b8"><path d="M6 0h2v2H6zM3 3h2v2H3zM6 3h2v2H6zM0 6h2v2H0zM3 6h2v2H3zM6 6h2v2H6z" /></svg>
    </div>
  )
}

// 右下角的系统激活提示和下载站标志
function Watermark() {
  return (
    <div className="pointer-events-none absolute bottom-0 right-0 h-[64px] w-[160px] overflow-hidden whitespace-nowrap">
      <svg viewBox="0 0 60 50" className="absolute left-0 top-3 h-[50px] w-[60px] opacity-80" aria-hidden="true">
        <path d="M38 3C12 5-2 20 4 35c3-13 14-22 34-32z" fill="#2180c8" />
        <path d="M7 33c5-16 24-16 22-5-2 6-12 8-13 2 3 3 8 1 8-2-1-5-12-3-17 5z" fill="#1872c8" />
        <path d="M3 42c18 0 38-10 34-22-3-5-10-4-14-2 14-8 26 1 17 12-8 10-24 13-37 12z" fill="#5daf32" />
      </svg>
      <p className="absolute left-11 top-3.5 text-xl font-bold leading-6 text-[#1d5c94]">极光下载站</p>
      <p className='absolute left-11 top-[40px] font-["Liberation_Sans",sans-serif] text-base font-bold text-[#257a35]'>www.xz7.com</p>
      <p className="absolute left-7 top-[3px] text-xl leading-6 text-white/45">激活 Windows</p>
      <p className="absolute left-7 top-[26px] text-base leading-6 text-white/45">转到"设置"以激活 W</p>
      <svg viewBox="0 0 12 12" className="absolute bottom-[9px] right-[7px] size-3" stroke="#e3e6ea" aria-hidden="true"><path d="M1 12L12 1M4 12l8-8M7 12l5-5M10 12l2-2" /></svg>
    </div>
  )
}

export default function App() {
  return (
    <div className='relative flex h-screen min-h-[974px] flex-col overflow-hidden bg-[#843f5a] font-["Noto_Sans","Noto_Sans_CJK_SC",sans-serif] text-xs leading-4'>
      {/* 后面的浏览器和另一个 CAD 窗口 */}
      <div className="absolute inset-0 bg-linear-to-b from-[#843f5a] from-30% via-[#65717c] via-60% to-[#c89468]" />
      <div className="absolute inset-y-0 left-0 w-[600px] bg-[#f2f2f2] text-[#777]">
        <p className="absolute -left-1 top-[22px]">32</p>
        <p className="absolute -left-1 top-[57px]">极</p>
        <p className="absolute -left-1 top-[140px]">验</p>
        <p className="absolute -left-1 top-[416px]">中</p>
        <div className="absolute bottom-0 h-[23px] w-full bg-[#8fb0d5]" />
      </div>
      <div className="absolute -bottom-[11px] left-[14px] right-0.5 top-[22px] flex flex-col justify-between bg-[#313740]">
        <div className="h-[50px] border-t-[30px] border-b border-t-white border-b-[#e6eaee]" />
        <StatusBar coords="953.1100, 170.3700, 0.0000" />
      </div>

      <div className="relative mx-2 mb-2 flex min-h-0 flex-1 flex-col border-t border-[#999] bg-[#313740] shadow-[0_0_4px_rgba(0,0,0,0.5)]">
        <TitleBar />
        <MenuBar />
        <div className="pl-px"><Toolbars /></div>
        <div className="mt-0.5 flex min-h-0 flex-1 gap-1 pr-[3px]">
          <div className="flex min-w-0 flex-1 flex-col">
            <div className="flex min-h-0 flex-1 gap-0.5 pr-px">
              <ToolColumn names={drawTools} />
              <DrawingArea />
              <ToolColumn names={modifyTools} />
            </div>
            <div className="mt-[5px] pl-px pr-0.5"><CommandLine /></div>
          </div>
          <CalculatorPanel />
          <PropertiesPanel />
        </div>
        <StatusBar coords="829.3724, 754.3687, 0.0000" />
      </div>

      <LinetypeDialog />
      <svg viewBox="0 0 18 118" className="pointer-events-none absolute left-[562px] top-[671px] h-[118px] w-[18px]" aria-hidden="true">
        <path d="M9 0l8 14-4-1 0 105h-1L4 13l-4 2z" fill="#ff1e12" />
      </svg>
      <Watermark />
    </div>
  )
}
